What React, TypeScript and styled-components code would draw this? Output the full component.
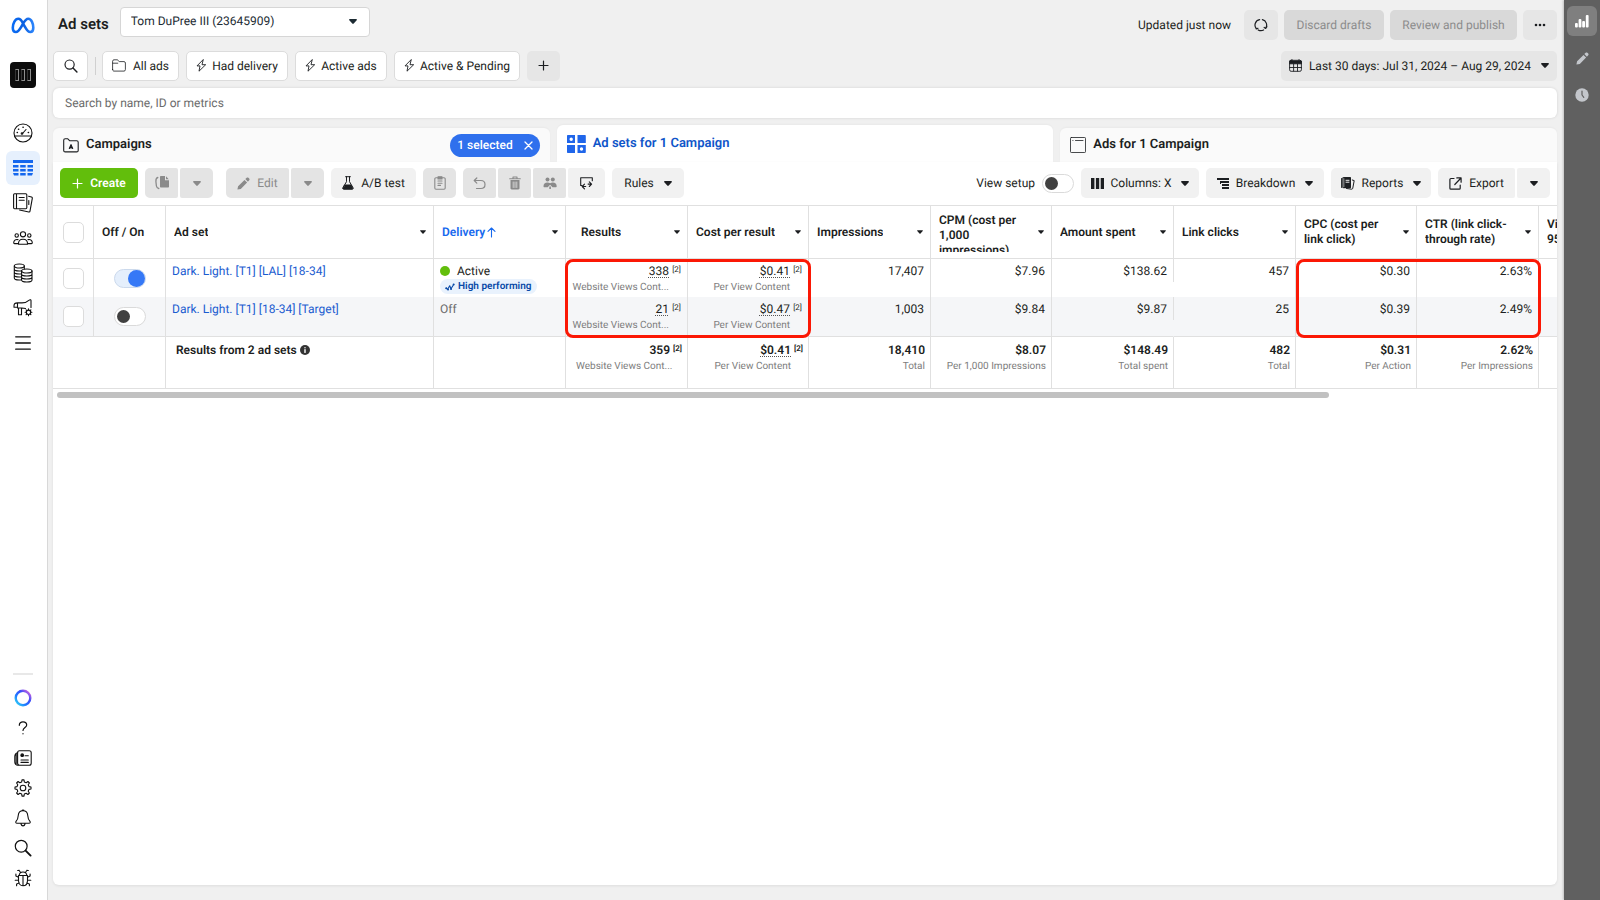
import React from "react";
import styled, { createGlobalStyle, css } from "styled-components";

const GlobalStyle = createGlobalStyle`
  *, *::before, *::after { box-sizing: border-box; }
  body { margin: 0; background: #f0f0f0; color: #1c1e21; font-family: Roboto, "Liberation Sans", sans-serif; font-size: 12px; line-height: 16px; text-rendering: geometricPrecision; }
  button, input, select { font: inherit; color: inherit; margin: 0; text-rendering: inherit; }
  button { cursor: pointer; }
  svg { display: block; flex: none; }
`;

/* ---------- icons ---------- */

type IconProps = { w: number; h?: number; box?: string; sw?: number; fill?: boolean; children: React.ReactNode };
const Icon = ({ w, h = w, box, sw = 1.1, fill, children }: IconProps) => (
  <svg
    width={w}
    height={h}
    viewBox={box ?? `0 0 ${w} ${h}`}
    fill={fill ? "currentColor" : "none"}
    stroke={fill ? "none" : "currentColor"}
    strokeWidth={sw}
    strokeLinecap="round"
    strokeLinejoin="round"
    aria-hidden="true"
  >
    {children}
  </svg>
);

const Caret = ({ small }: { small?: boolean }) => (
  <Icon w={small ? 6 : 8} h={small ? 4 : 5} box="0 0 8 5" fill>
    <path d="M.9 0h6.2c.8 0 1.1.8.6 1.3L4.7 4.6a1 1 0 0 1-1.4 0L.3 1.300C-.2.8.1 0 .9 0z" />
  </Icon>
);
const MetaLogo = () => (
  <svg width="24" height="17" viewBox="0 0 24 17" fill="none" strokeWidth="2.6" aria-label="Meta">
    <defs>
      <linearGradient id="meta" x1="0" x2="1">
        <stop offset="0" stopColor="#0a6cf5" />
        <stop offset=".5" stopColor="#0a5fe0" />
        <stop offset="1" stopColor="#2b84fb" />
      </linearGradient>
    </defs>
    <path
      stroke="url(#meta)"
      d="M11.900 6.300C10.600 3.500 9.200 1.800 7.300 1.800 4.200 1.800 1.800 6.300 1.800 10.800c0 2.600 1.200 4.200 3.100 4.200 2.100 0 3.400-1.900 5.200-4.900l1.800-3.100c1.700-3 3.200-5.200 5.400-5.200 3 0 5 4.600 5 9 0 2.700-1.100 4.200-3 4.200-2.200 0-3.500-2-5.300-5.200z"
    />
  </svg>
);
const GaugeIcon = () => (
  <Icon w={20}>
    <circle cx="10" cy="10" r="9" />
    <path d="M1.500 13h17M9.500 10.500l3.500-4" />
    <circle cx="9" cy="10.500" r=".8" />
    <path d="M4.200 9.500h.2M5.500 6.200h.2M10 4.200h.2M15.300 9.500h.2" strokeWidth="1.500" />
  </Icon>
);
const TableIcon = () => (
  <Icon w={20} h={16} fill>
    <path d="M0 0h20v3H0zM0 5h5.500v2.500H0zM7.200 5h5.500v2.500H7.200zM14.500 5H20v2.500h-5.500zM0 9h5.500v2.500H0zM7.200 9h5.500v2.500H7.200zM14.500 9H20v2.500h-5.500zM0 13h5.500v2.500H1zM7.200 13h5.500v2.500H7.200zM14.500 13H20l-1 2.500h-4.500z" />
  </Icon>
);
const PagesIcon = () => (
  <Icon w={20}>
    <path d="M1.500.8h11.300c.6 0 1 .4 1 1v13c0 .5-.4.900-1 .9H1.500c-.5 0-.9-.4-.9-.9v-13c0-.6.4-1 .9-1zM3.500.8v14.900M6.200 4.500h5M6.200 7.200h5" />
    <path d="M15.600 3.200l2.900.8c.6.200.9.700.8 1.300l-2.300 12.900c-.1.600-.6.900-1.200.8L6.500 17M15.800 7.500v4" />
  </Icon>
);
const PeopleIcon = () => (
  <Icon w={20} h={14}>
    <circle cx="10" cy="3.300" r="2.600" />
    <circle cx="3.700" cy="4.500" r="1.700" />
    <circle cx="16.300" cy="4.500" r="1.700" />
    <path d="M5.500 13.200c-.3-3.200 1.400-5 4.500-5s4.800 1.800 4.500 5zM5 8.600c-2.600-.5-4.200.7-4.300 3.200 0 .6.300.8.800.8h3.300M15 8.600c2.600-.5 4.200.7 4.300 3.200 0 .6-.3.800-.8.800h-3.300" />
  </Icon>
);
const CoinsIcon = () => (
  <Icon w={20}>
    <ellipse cx="6.300" cy="3" rx="5" ry="2" />
    <path d="M1.300 3v12c0 1.100 2.200 2 5 2 .8 0 1.500 0 2.200-.2M11.300 3v3M1.300 6c0 1.100 2.200 2 5 2 .8 0 1.500 0 2.200-.2M1.300 9c0 1.100 2.200 2 5 2 .8 0 1.500 0 2.200-.2M1.300 12c0 1.100 2.200 2 5 2 .8 0 1.500 0 2.200-.2" />
    <ellipse cx="13.800" cy="8" rx="5.200" ry="2" />
    <path d="M8.600 8v9c0 1.100 2.300 2 5.200 2s5.200-.9 5.200-2V8M8.600 11c0 1.100 2.300 2 5.200 2s5.200-.9 5.200-2M8.600 14c0 1.100 2.300 2 5.200 2s5.200-.9 5.200-2" />
  </Icon>
);
const MegaphoneIcon = () => (
  <Icon w={20}>
    <path d="M18 9.500V2.600c0-.7-.8-1.100-1.300-.7-2.300 2-4.600 3-7.700 3H4.500C2.500 4.900 1 6 1 7.700v1.600h3.500v-4.400M12.500 10.600C11.400 10.200 10.200 10 9 10H4.500V9.300M5.500 10.500v6.300h3V10" />
    <circle cx="15.500" cy="14.300" r="2.200" />
    <path d="M15.500 10.900v1M15.500 16.700v1M12.100 14.300h1M17.900 14.300h1M13.100 11.900l.7.7M17.200 16l.7.7M13.100 16.700l.7-.7M17.200 12.600l.7-.7" />
  </Icon>
);
const MenuIcon = () => (
  <Icon w={16} h={14} sw={1.300}>
    <path d="M.7.8h14.600M.7 7h14.600M.7 13.200h14.600" />
  </Icon>
);
const RingIcon = () => (
  <svg width="18" height="18" viewBox="0 0 18 18" fill="none" aria-hidden="true">
    <defs>
      <linearGradient id="ring" x1="0" y1="1" x2="1" y2="0">
        <stop offset="0" stopColor="#35e0f5" />
        <stop offset=".35" stopColor="#1d7bff" />
        <stop offset=".65" stopColor="#3a4dfa" />
        <stop offset="1" stopColor="#f06ad8" />
      </linearGradient>
    </defs>
    <circle cx="9" cy="9" r="7.300" stroke="url(#ring)" strokeWidth="2.400" />
  </svg>
);
const HelpIcon = () => (
  <Icon w={10} h={14} sw={1.200}>
    <path d="M1.300 4.300C1.300 2.200 2.800.8 5 .8s3.700 1.300 3.700 3.200C8.700 6.500 5 6.500 5 9.500M5 12.600v.2" />
  </Icon>
);
const NewsIcon = () => (
  <Icon w={18} h={16}>
    <rect x="3.600" y=".8" width="13.600" height="14.400" rx="2" />
    <path d="M3.600 2.700C1.500 3.200.8 4.500.8 6.500v5c0 2 1 3.700 3.200 3.700M2.200 4v9.500M7 10h7.300M7 12.400h7.300M11 5.800h3.300" />
    <circle cx="8.200" cy="5.200" r="1.300" fill="currentColor" />
  </Icon>
);
const GearIcon = () => (
  <Icon w={18}>
    <circle cx="9" cy="9" r="2.800" />
    <path d="M7.700 2.900L8 .9h2l.3 2 1.900.8 1.700-1.200 1.500 1.500-1.200 1.700.8 1.900 2 .4v2l-2 .4-.8 1.900 1.200 1.700-1.500 1.500-1.700-1.200-1.900.8-.3 2H8l-.3-2-1.900-.8-1.700 1.200L2.600 14l1.200-1.700L3 10.400 1 10V8l2-.4.8-1.900L2.600 4l1.500-1.500 1.700 1.200z" />
  </Icon>
);
const BellIcon = () => (
  <Icon w={18}>
    <path d="M9 1.800c-3.200 0-4.600 2.300-4.800 4.900-.2 3-.8 4.200-2 5.500-.9 1 -.4 2.100.8 2.100h12c1.200 0 1.700-1.100.8-2.100-1.200-1.300-1.800-2.500-2-5.500C13.600 4.100 12.200 1.800 9 1.800zM7 15c.3 1.200 1 1.900 2 1.900s1.700-.7 2-1.900M8 1.800C8 .7 10 .7 10 1.800" />
  </Icon>
);
const SearchIcon = ({ size = 18 }: { size?: number }) => (
  <Icon w={size} box="0 0 18 18" sw={size < 16 ? 1.500 : 1.200}>
    <circle cx="7.200" cy="7.200" r="5.900" />
    <path d="M11.600 11.600l5 5" strokeWidth="1.900" />
  </Icon>
);
const BugIcon = () => (
  <Icon w={18}>
    <path d="M4.500 6.500h9v5c0 3-1.700 5.300-4.500 5.300s-4.500-2.300-4.500-5.300zM9 6.500v10.300M5.200 6.300C5.400 4.200 6.800 3 9 3s3.600 1.200 3.800 3.300M6.600 3.500L5 1.200M11.400 3.500L13 1.200M5 1.200L3.600 1.500M13 1.200l1.400.3M4.500 8.300L1.900 7V5M13.500 8.300L16.100 7V5M4.500 11.300H1.200M13.500 11.300h3.300M5.200 13.900l-2.600 1v1.800M12.800 13.900l2.600 1v1.800" />
  </Icon>
);
const FolderIcon = () => (
  <Icon w={14} h={13} sw={0.800}>
    <path d="M.6 10.600V2.200C.6 1.300 1.200.8 2 .8h3c.5 0 .9.200 1.200.6l.6.900c.2.200.4.300.7.300H12c.9 0 1.400.6 1.400 1.400v6.600c0 .9-.5 1.500-1.400 1.500H2c-.8 0-1.400-.6-1.400-1.500zM.8 4.200h5" />
  </Icon>
);
const BoltIcon = () => (
  <Icon w={11} h={13} sw={0.900}>
    <path d="M7 .8L1 6.900h3l-1 5.300 6.700-6.500H6.400z" />
  </Icon>
);
const PlusIcon = () => (
  <Icon w={11} sw={1.200}>
    <path d="M5.500 1v9M1 5.500h9" />
  </Icon>
);
const RefreshIcon = () => (
  <Icon w={14} sw={1.200}>
    <path d="M2.400 10.800A5.600 5.600 0 0 1 5.600 1.600M8.400 1.600a5.600 5.600 0 0 1 3.200 8.700M9.600 12a5.600 5.600 0 0 1-5.400-.1M1.600 9.200l.7 1.700 1.700-.6M12.900 8.700l-1.200 1.700-1.500-1" />
  </Icon>
);
const DotsIcon = () => (
  <Icon w={12} h={4} fill>
    <circle cx="2" cy="2" r="1.300" />
    <circle cx="6" cy="2" r="1.300" />
    <circle cx="10" cy="2" r="1.300" />
  </Icon>
);
const CalendarIcon = () => (
  <Icon w={13} sw={0.900}>
    <rect x=".6" y="1.300" width="11.800" height="11" rx="1.500" />
    <path d="M.6 2h11.800v2.800H.6z" fill="currentColor" />
    <path d="M.6 8.500h11.800M4.600 5v7M8.500 5v7M3 .6v1M10 .6v1" />
  </Icon>
);
const CampaignIcon = () => (
  <Icon w={16} h={15} sw={1.100}>
    <path d="M.7 12.400V2.300C.7 1.400 1.300.8 2.200.8h2.600l2 2h6.900c.9 0 1.500.6 1.500 1.500v8.100c0 .9-.6 1.500-1.500 1.500H2.200c-.9 0-1.500-.6-1.500-1.500z" />
    <path d="M6.300 10.500L8 6.600l1.700 3.900L8 9.500z" fill="currentColor" />
  </Icon>
);
const GridIcon = () => (
  <Icon w={19} h={18} fill>
    <path
      fill="#2066ea"
      fillRule="evenodd"
      d="M1 0h7v8H0V1c0-.6.400-1 1-1zm3.200 2.500a1.700 1.700 0 1 0 0 3.400 1.700 1.700 0 0 0 0-3.400zM10.500 0h7.300c.6 0 1 .4 1 1v7h-8.300zM0 10h8v8H1c-.6 0-1-.4-1-1zM10.500 10h8.300v7c0 .6-.4 1-1 1h-7.300zm4 2.300a1.700 1.700 0 1 0 0 3.400 1.700 1.700 0 0 0 0-3.400z"
    />
  </Icon>
);
const AdIcon = () => (
  <Icon w={16} sw={0.800}>
    <rect x=".5" y=".5" width="15" height="15" rx=".8" />
    <path d="M2.800 3.500h.2M5.500 3.500h7.500" />
  </Icon>
);
const CloseIcon = () => (
  <Icon w={9} sw={1.300}>
    <path d="M1 1l7 7M8 1L1 8" />
  </Icon>
);
const CopyIcon = () => (
  <Icon w={14} h={14} fill>
    <path d="M6 0h4v4.200h4v6.300c0 .6-.4 1-1 1H6c-.6 0-1-.4-1-1V1c0-.6.400-1 1-1zM11 .3l2.700 2.900H11z" />
    <path d="M2.800 1.500C1 1.800.8 3 .9 5.500l.5 4.500c.3 1.700.9 2.300 2.400 2.500" fill="none" stroke="currentColor" strokeWidth="1.300" />
  </Icon>
);
const PencilIcon = () => (
  <Icon w={13} fill>
    <path d="M.4 12.600l.7-3.400 6.400-6.300 2.600 2.600-6.300 6.400zM8.300 2.100L9.700.8c.5-.5 1.200-.5 1.700 0l.8.8c.5.5.5 1.200 0 1.700l-1.300 1.400z" />
  </Icon>
);
const FlaskIcon = () => (
  <Icon w={12} h={14} sw={1}>
    <path d="M3.600.7h4.800M4.500.7v5L.9 11.800c-.4.800.1 1.500.9 1.500h8.400c.8 0 1.300-.7.9-1.500L7.500 5.700v-5" />
    <path d="M2.900 9h6.200l1.600 3.500H1.300z" fill="currentColor" />
  </Icon>
);
const ClipboardIcon = () => (
  <Icon w={12} h={14}>
    <path d="M3.500 1.800H2c-.7 0-1.200.5-1.200 1.200v9c0 .7.500 1.200 1.200 1.200h8c.7 0 1.200-.5 1.200-1.200V3c0-.7-.5-1.200-1.200-1.200H8.500M4 5h4M4 7.200h4M4 9.400h2.500" />
    <path d="M4 .7h4v2.200H4z" fill="currentColor" />
  </Icon>
);
const UndoIcon = () => (
  <Icon w={13} sw={1.200}>
    <path d="M3.800 1L1.200 3.500l2.600 2.600M1.300 3.500h6.500c2.400 0 4.200 1.700 4.200 4s-1.800 4-4.200 4H3.500" />
  </Icon>
);
const TrashIcon = () => (
  <Icon w={12} h={14}>
    <path d="M.7 2.700h10.600M4 2.500V1h4v1.500" />
    <path d="M1.500 4h9v8.200c0 .7-.5 1.200-1.200 1.200H2.700c-.7 0-1.200-.5-1.200-1.200z" fill="currentColor" stroke="none" />
    <path d="M4.200 6v5.500M6 6v5.500M7.800 6v5.500" stroke="#e5e5e5" strokeWidth=".8" />
  </Icon>
);
const TeamIcon = () => (
  <Icon w={14} h={12} fill>
    <circle cx="4.500" cy="2.500" r="2" />
    <circle cx="9.800" cy="2.500" r="2" />
    <path d="M.5 9.500C.4 7 2 5.600 4.500 5.600c1 0 1.800.2 2.600.6.800-.4 1.700-.6 2.700-.6 2.400 0 4 1.400 3.900 3.900 0 .5-.3.700-.7.700H9.500L7.100 7.800l-2.400 2.400H1.200c-.4 0-.7-.2-.7-.7zM6.300 9.500h1.600V12H6.300z" />
  </Icon>
);
const SwapIcon = () => (
  <Icon w={13} sw={1.100}>
    <path d="M1.800 8.500H.7V.8h11.600v3M4.500 7.200L2.200 9.500l2.300 2.400M2.400 9.500h3.300M9.300 4.800l2.300 2.300-2.300 2.400M11.400 7.100H8.100" />
  </Icon>
);
const ColumnsIcon = () => (
  <Icon w={13} h={11} fill>
    <path d="M0 0h3.400v11H0zM4.900 0h3.300v11H4.900zM9.700 0H13v11H9.700z" />
  </Icon>
);
const BreakdownIcon = () => (
  <Icon w={12} h={11} fill>
    <path d="M0 0h12v2H0zM3 3h9v2H3zM5 6h7v2H5zM5 9h7v2H5zM3 3h1v3H3z" />
  </Icon>
);
const ReportsIcon = () => (
  <Icon w={14} h={13} sw={1}>
    <path d="M.6 1.500v9M2.200.7h7.100v10H2.200z" />
    <path d="M3.500.7h6v9.800h-6z" fill="currentColor" />
    <path d="M5 3.300h3M5 5.200h3" stroke="#f1f1f1" />
    <path d="M11.300 3l1.900.6-1.500 8-.9.600-5.300-.7" />
  </Icon>
);
const ExportIcon = () => (
  <Icon w={13} sw={1.200}>
    <path d="M5 1.500H1.900c-.6 0-1 .4-1 1v8.700c0 .6.400 1 1 1h8.300c.6 0 1-.4 1-1V8M7.800.9h4.300v4.300M12 1L5.800 7.500" />
  </Icon>
);
const BarsIcon = () => (
  <Icon w={14} h={13} fill>
    <rect x="0" y="8" width="2.800" height="4.500" rx="1" />
    <rect x="3.600" y="4" width="2.800" height="8.500" rx="1" />
    <rect x="7.200" y="6" width="2.800" height="6.500" rx="1" />
    <rect x="10.800" y="0" width="2.800" height="12.500" rx="1" />
  </Icon>
);
const ClockIcon = () => (
  <Icon w={14}>
    <circle cx="7" cy="7" r="6.700" fill="currentColor" stroke="none" />
    <path d="M7 3v4l1.800 2.300" stroke="#606060" strokeWidth="1.200" />
  </Icon>
);
const TrendIcon = () => (
  <Icon w={10} h={8} sw={1.100}>
    <path d="M1.200 5.300l1.500 1 2-3.500L6 5.800l2.700-4.300" />
    <path d="M1.200 5.200h.1M3 6.600h.1M6 6h.1M8.600 1.400h.1" strokeWidth="1.900" />
  </Icon>
);
const InfoIcon = () => (
  <Icon w={10}>
    <circle cx="5" cy="5" r="5" fill="#333" stroke="none" />
    <path d="M5 4.600v2.800M5 2.600v.1" stroke="#fff" strokeWidth="1.400" />
  </Icon>
);
const ArrowUpIcon = () => (
  <Icon w={9} h={11}>
    <path d="M4.500 10V1M1 4.300L4.500 1 8 4.300" />
  </Icon>
);

/* ---------- layout ---------- */

const Page = styled.div`
  display: flex;
  min-height: 100vh;
`;
const Sidebar = styled.nav`
  flex: none;
  width: 48px;
  display: flex;
  flex-direction: column;
  align-items: center;
  padding: 17px 1px 7px 0;
  background: #fff;
  border-right: 1px solid #d8d8d8;
  color: #111;
`;
const AccountTile = styled.a`
  display: flex;
  align-items: center;
  justify-content: center;
  gap: 2px;
  width: 26px;
  height: 26px;
  margin: 28px 0;
  border-radius: 4px;
  background: #0c0c0c;
`;
const TileBar = styled.span`
  width: 4px;
  height: 12px;
  border: 1px solid #8e8e8e;
  border-left-color: #333;
`;
const NavButton = styled.button<{ $active?: boolean; $low?: boolean }>`
  flex: none;
  display: flex;
  align-items: center;
  justify-content: center;
  width: 34px;
  height: ${(p) => (p.$low ? 30 : 34)}px;
  margin-bottom: ${(p) => (p.$low ? 0 : 1)}px;
  padding: 0;
  border: 0;
  border-radius: 6px;
  background: ${(p) => (p.$active ? "#e6f0fd" : "transparent")};
  color: ${(p) => (p.$active ? "#1467ee" : "#111")};
`;
const NavRule = styled.hr`
  width: 20px;
  height: 2px;
  margin: auto 0 8px;
  border: 0;
  background: #e8e8e8;
`;
const Main = styled.main`
  flex: 1;
  min-width: 0;
  display: flex;
  flex-direction: column;
  padding: 7px 7px 15px 5px;
`;
const Rail = styled.aside`
  flex: none;
  width: 36px;
  display: flex;
  flex-direction: column;
  align-items: center;
  gap: 7px;
  padding-top: 6px;
  background: #606060;
  box-shadow: -1px 0 2px rgba(0, 0, 0, 0.2);
`;
const RailButton = styled.button<{ $active?: boolean }>`
  display: flex;
  align-items: center;
  justify-content: center;
  width: 30px;
  height: 30px;
  padding: 0;
  border: 0;
  border-radius: 6px;
  background: ${(p) => (p.$active ? "#7f7f7f" : "transparent")};
  color: ${(p) => (p.$active ? "#fff" : "#c3c6cb")};
`;

const TopBar = styled.header`
  display: flex;
  align-items: flex-start;
  min-height: 43px;
`;
const Title = styled.h1`
  margin: 7px 11px 0 5px;
  font-size: 15px;
  line-height: 20px;
  font-weight: 600;
`;
const AccountPicker = styled.div`
  position: relative;
  width: 250px;
  color: #1c2b33;
  svg {
    position: absolute;
    right: 13px;
    top: 12px;
    pointer-events: none;
  }
`;
const AccountSelect = styled.select`
  appearance: none;
  width: 100%;
  height: 30px;
  padding: 0 30px 2px 10px;
  border: 1px solid #d6d6d6;
  border-radius: 4px;
  background: #fff;
`;
const TopActions = styled.div`
  display: flex;
  align-items: center;
  gap: 6px;
  margin-left: auto;
  padding-top: 3px;
`;
const Updated = styled.span`
  margin-right: 7px;
`;

type Tone = "outline" | "plain" | "soft" | "muted" | "blocked" | "create";
const tones: Record<Tone, ReturnType<typeof css>> = {
  outline: css`background: #fff; border: 1px solid #dcdcdc; color: #1c1e21;`,
  plain: css`background: #f1f1f1; color: #1c1e21;`,
  soft: css`background: #e6e6e6; color: #1c1e21;`,
  muted: css`background: #e4e4e4; color: #8a8a8a;`,
  blocked: css`background: #d9d9d9; color: #8c8c8c;`,
  create: css`background: #62be0c; color: #fff; font-weight: 600;`,
};
const Button = styled.button<{ $tone: Tone; $w: number; $side?: "left" | "mid" | "right" }>`
  flex: none;
  display: flex;
  align-items: center;
  justify-content: center;
  gap: 7px;
  min-width: ${(p) => p.$w}px;
  height: 30px;
  padding: 0;
  border: 0;
  border-radius: ${(p) =>
    p.$side === "left" ? "5px 2px 2px 5px" : p.$side === "right" ? "2px 5px 5px 2px" : p.$side === "mid" ? "2px" : "5px"};
  white-space: nowrap;
  ${(p) => tones[p.$tone]}
  &:disabled { cursor: default; }
`;
const QuickFilter = styled(Button)`
  gap: 5px;
`;
const CaretSlot = styled.span`
  margin-left: 3px;
`;
const FilterBar = styled.div`
  display: flex;
  align-items: center;
  gap: 7px;
  min-height: 31px;
`;
const Divider = styled.span`
  width: 1px;
  height: 18px;
  margin-right: -1px;
  background: #d0d0d0;
`;
const Push = styled.span`
  margin-left: auto;
`;
const SearchBox = styled.input`
  width: 100%;
  height: 30px;
  margin: 7px 0;
  padding: 0 12px;
  border: 0;
  border-radius: 6px;
  background: #fff;
  box-shadow: 0 0 3px rgba(0, 0, 0, 0.12);
  &::placeholder { color: #6b6b6b; opacity: 1; }
`;

const Tabs = styled.div`
  display: grid;
  grid-template-columns: repeat(3, 1fr);
  gap: 7px;
  align-items: end;
`;
const Tab = styled.div<{ $active?: boolean }>`
  display: flex;
  align-items: center;
  height: ${(p) => (p.$active ? 37 : 34)}px;
  padding: 0 10px;
  border-radius: 6px 6px 0 0;
  background: ${(p) => (p.$active ? "#fff" : "#fafafa")};
  box-shadow: 0 -1px 2px rgba(0, 0, 0, 0.03);
`;
const TabButton = styled.button<{ $active?: boolean }>`
  display: flex;
  align-items: center;
  gap: 7px;
  height: 30px;
  margin-right: auto;
  padding: 0;
  border: 0;
  background: none;
  font-size: 13px;
  font-weight: 600;
  color: ${(p) => (p.$active ? "#0f56c9" : "#1c1e21")};
`;
const Pill = styled.button`
  display: flex;
  align-items: center;
  gap: 11px;
  height: 23px;
  padding: 0 7px;
  border: 0;
  border-radius: 12px;
  background: #2f70ed;
  color: #fff;
  font-weight: 500;
`;

const Panel = styled.section`
  flex: 1;
  background: #fff;
  border-radius: 0 0 6px 6px;
  box-shadow: 0 1px 3px rgba(0, 0, 0, 0.08);
`;
const Toolbar = styled.div`
  display: flex;
  align-items: center;
  gap: 7px;
  padding: 6px 7px 7px;
`;
const Split = styled.div`
  display: flex;
  gap: 2px;
`;
const SplitSpaced = styled(Split)`
  margin-left: 6px;
`;
const SetupLabel = styled.label`
  display: flex;
  align-items: center;
  gap: 7px;
  margin-left: auto;
  white-space: nowrap;
`;
const Toggle = styled.input`
  appearance: none;
  flex: none;
  display: block;
  position: relative;
  width: 32px;
  height: 19px;
  border: 1px solid #dadada;
  border-radius: 10px;
  background: #fff;
  &::before {
    content: "";
    position: absolute;
    top: 2px;
    left: 2px;
    width: 13px;
    height: 13px;
    border-radius: 50%;
    background: #404040;
  }
  &:checked { background: #e5effc; border-color: #cbd9ec; }
  &:checked::before { top: 0; left: 13px; width: 17px; height: 17px; background: #3578f6; }
`;
const Check = styled.input`
  appearance: none;
  display: block;
  width: 21px;
  height: 21px;
  margin: 0 auto;
  border: 1px solid #dcdcdc;
  border-radius: 5px;
  background: #fff;
`;

const TableArea = styled.div`
  position: relative;
  overflow: hidden;
`;
const Table = styled.table`
  width: 1608px;
  table-layout: fixed;
  border-collapse: separate;
  border-spacing: 0;
  border-top: 1px solid #e0e0e0;
`;
const rule = "1px solid #e0e0e0";
const Head = styled.th<{ $bare?: boolean }>`
  height: 53px;
  padding: ${(p) => (p.$bare ? "0" : "0 7px 0 8px")};
  border-right: ${rule};
  border-bottom: ${rule};
  text-align: left;
  font-weight: 600;
`;
const HeadInner = styled.div<{ $inset?: boolean; $sorted?: boolean }>`
  display: flex;
  align-items: center;
  justify-content: space-between;
  padding-left: ${(p) => (p.$inset ? 7 : 0)}px;
  color: ${(p) => (p.$sorted ? "#1769ee" : "#1c1e21")};
  > svg { color: #1c1e21; }
`;
const HeadText = styled.span`
  display: block;
  max-width: 96px;
  max-height: 39px;
  overflow: hidden;
  line-height: 15px;
`;
const SortText = styled.span`
  display: flex;
  align-items: center;
  gap: 2px;
`;
const Row = styled.tr<{ $shaded?: boolean }>`
  background-color: ${(p) => (p.$shaded ? "#f5f6f8" : "#fff")};
`;
const Cell = styled.td<{ $num?: boolean; $last?: boolean; $short?: boolean; $mid?: boolean }>`
  height: ${(p) => (p.$last ? 40 : 38)}px;
  padding: ${(p) => (p.$mid ? "0" : "4px 6px 0")};
  border-right: ${rule};
  border-bottom: ${(p) => (p.$last ? rule : "0")};
  vertical-align: ${(p) => (p.$mid ? "middle" : "top")};
  text-align: ${(p) => (p.$num ? "right" : "left")};
  white-space: nowrap;
  ${(p) =>
    p.$short &&
    css`
      border-right-color: transparent;
      background: linear-gradient(#e0e0e0, #e0e0e0) right top / 1px 23px no-repeat border-box;
    `}
`;
const TotalCell = styled.td<{ $num?: boolean }>`
  height: 52px;
  padding: 5px ${(p) => (p.$num ? 5 : 7)}px 0 10px;
  border-right: ${rule};
  border-bottom: ${rule};
  vertical-align: top;
  text-align: ${(p) => (p.$num ? "right" : "left")};
  font-weight: 600;
  white-space: nowrap;
`;
const TotalLabel = styled.span`
  display: flex;
  align-items: center;
  gap: 3px;
`;
const Centered = styled.div`
  display: flex;
  justify-content: center;
`;
const NameLink = styled.a`
  color: #1b5cd0;
  text-decoration: none;
`;
const Value = styled.span<{ $dotted?: boolean }>`
  ${(p) =>
    p.$dotted &&
    css`
      text-decoration: underline dotted #555 1px;
      text-underline-offset: 2px;
    `}
`;
const Note = styled.sup`
  display: inline-block;
  width: 12px;
  font-size: 8px;
  line-height: 8px;
  text-align: right;
  vertical-align: 3px;
`;
const Sub = styled.div<{ $noted?: boolean }>`
  margin-right: ${(p) => (p.$noted ? 12 : 0)}px;
  font-size: 10px;
  line-height: 18px;
  font-weight: 400;
  color: #7d7d7d;
`;
const Status = styled.div<{ $off?: boolean }>`
  display: flex;
  align-items: center;
  gap: 7px;
  color: ${(p) => (p.$off ? "#6b6b6b" : "inherit")};
`;
const Dot = styled.span`
  width: 10px;
  height: 10px;
  border-radius: 50%;
  background: #62be0c;
`;
const Badge = styled.span`
  display: inline-flex;
  align-items: center;
  gap: 3px;
  height: 15px;
  padding: 0 5px;
  border-radius: 8px;
  background: #e9f2fd;
  color: #0a4aa8;
  font-size: 10px;
  line-height: 15px;
  font-weight: 600;
  vertical-align: top;
`;
const Highlight = styled.div<{ $left: number; $width: number }>`
  position: absolute;
  top: 54px;
  left: ${(p) => p.$left}px;
  width: ${(p) => p.$width}px;
  height: 79px;
  border: 3px solid #fb1805;
  border-radius: 8px;
  pointer-events: none;
`;
const ScrollTrack = styled.div`
  padding: 3px 4px;
`;
const ScrollThumb = styled.div`
  width: 85%;
  height: 6px;
  border-radius: 3px;
  background: #c1c1c1;
`;

/* ---------- data ---------- */

const columnWidths = [41, 72, 268, 132, 122, 121, 122, 121, 122, 122, 121, 122, 122];
const metricHeads = [
  "Impressions",
  "CPM (cost per 1,000 impressions)",
  "Amount spent",
  "Link clicks",
  "CPC (cost per link click)",
  "CTR (link click-through rate)",
  "Video plays at 95%",
];
const adSets = [
  { name: "Dark. Light. [T1] [LAL] [18-34]", on: true, results: "338", cost: "$0.41", metrics: ["17,407", "$7.96", "$138.62", "457", "$0.30", "2.63%"] },
  { name: "Dark. Light. [T1] [18-34] [Target]", on: false, results: "21", cost: "$0.47", metrics: ["1,003", "$9.84", "$9.87", "25", "$0.39", "2.49%"] },
];
const totals = [
  ["18,410", "Total"],
  ["$8.07", "Per 1,000 Impressions"],
  ["$148.49", "Total spent"],
  ["482", "Total"],
  ["$0.31", "Per Action"],
  ["2.62%", "Per Impressions"],
];
const mainNav = [
  { label: "Account overview", icon: <GaugeIcon /> },
  { label: "Campaigns", icon: <TableIcon />, active: true },
  { label: "Ads reporting", icon: <PagesIcon /> },
  { label: "Audiences", icon: <PeopleIcon /> },
  { label: "Billing", icon: <CoinsIcon /> },
  { label: "Advertising settings", icon: <MegaphoneIcon /> },
  { label: "All tools", icon: <MenuIcon /> },
];
const lowNav = [
  { label: "Meta AI", icon: <RingIcon /> },
  { label: "Help", icon: <HelpIcon /> },
  { label: "News", icon: <NewsIcon /> },
  { label: "Settings", icon: <GearIcon /> },
  { label: "Notifications", icon: <BellIcon /> },
  { label: "Search", icon: <SearchIcon /> },
  { label: "Report a problem", icon: <BugIcon /> },
];

/* ---------- parts ---------- */

const AdSetTable = () => (
  <TableArea>
    <Table>
      <colgroup>
        {columnWidths.map((w, i) => (
          <col key={i} width={w} />
        ))}
      </colgroup>
      <thead>
        <tr>
          <Head $bare>
            <Check type="checkbox" aria-label="Select all ad sets" />
          </Head>
          <Head>Off / On</Head>
          <Head>
            <HeadInner>
              <HeadText>Ad set</HeadText>
              <Caret small />
            </HeadInner>
          </Head>
          <Head>
            <HeadInner $sorted>
              <SortText>
                Delivery
                <ArrowUpIcon />
              </SortText>
              <Caret small />
            </HeadInner>
          </Head>
          <Head>
            <HeadInner $inset>
              <HeadText>Results</HeadText>
              <Caret small />
            </HeadInner>
          </Head>
          <Head>
            <HeadInner>
              <HeadText>Cost per result</HeadText>
              <Caret small />
            </HeadInner>
          </Head>
          {metricHeads.map((h) => (
            <Head key={h}>
              <HeadInner>
                <HeadText>{h}</HeadText>
                <Caret small />
              </HeadInner>
            </Head>
          ))}
        </tr>
      </thead>
      <tbody>
        {adSets.map((row, r) => {
          const last = r === adSets.length - 1;
          return (
            <Row key={row.name} $shaded={last}>
              <Cell $mid $last={last}>
                <Check type="checkbox" aria-label={`Select ${row.name}`} />
              </Cell>
              <Cell $mid $last={last}>
                <Centered>
                  <Toggle type="checkbox" role="switch" defaultChecked={row.on} aria-label={`Turn ${row.name} on or off`} />
                </Centered>
              </Cell>
              <Cell $last={last}>
                <NameLink href="#adset">{row.name}</NameLink>
              </Cell>
              <Cell $last={last}>
                {row.on ? (
                  <>
                    <Status>
                      <Dot />
                      Active
                    </Status>
                    <Badge>
                      <TrendIcon />
                      High performing
                    </Badge>
                  </>
                ) : (
                  <Status $off>Off</Status>
                )}
              </Cell>
              <Cell $num $last={last}>
                <Value $dotted>{row.results}</Value>
                <Note>[2]</Note>
                <Sub $noted>Website Views Cont...</Sub>
              </Cell>
              <Cell $num $last={last}>
                <Value $dotted>{row.cost}</Value>
                <Note>[2]</Note>
                <Sub $noted>Per View Content</Sub>
              </Cell>
              {row.metrics.map((m, i) => (
                <Cell key={i} $num $last={last} $short={i === 2}>
                  {m}
                </Cell>
              ))}
              <Cell $last={last} />
            </Row>
          );
        })}
      </tbody>
      <tfoot>
        <tr>
          <TotalCell colSpan={2} />
          <TotalCell>
            <TotalLabel>
              Results from 2 ad sets
              <InfoIcon />
            </TotalLabel>
          </TotalCell>
          <TotalCell />
          <TotalCell $num>
            <Value>359</Value>
            <Note>[2]</Note>
            <Sub $noted>Website Views Cont...</Sub>
          </TotalCell>
          <TotalCell $num>
            <Value $dotted>$0.41</Value>
            <Note>[2]</Note>
            <Sub $noted>Per View Content</Sub>
          </TotalCell>
          {totals.map(([v, s], i) => (
            <TotalCell key={i} $num>
              {v}
              <Sub>{s}</Sub>
            </TotalCell>
          ))}
          <TotalCell />
        </tr>
      </tfoot>
    </Table>
    <Highlight $left={512} $width={246} />
    <Highlight $left={1243} $width={245} />
  </TableArea>
);

const MenuCaret = () => (
  <CaretSlot>
    <Caret />
  </CaretSlot>
);

export default function App() {
  return (
    <>
      <GlobalStyle />
      <Page>
        <Sidebar aria-label="Ads Manager">
          <MetaLogo />
          <AccountTile href="#business" aria-label="Business account">
            <TileBar />
            <TileBar />
            <TileBar />
          </AccountTile>
          {mainNav.map((n) => (
            <NavButton key={n.label} $active={n.active} aria-label={n.label}>
              {n.icon}
            </NavButton>
          ))}
          <NavRule />
          {lowNav.map((n) => (
            <NavButton key={n.label} $low aria-label={n.label}>
              {n.icon}
            </NavButton>
          ))}
        </Sidebar>

        <Main>
          <TopBar>
            <Title>Ad sets</Title>
            <AccountPicker>
              <AccountSelect aria-label="Ad account">
                <option>Tom DuPree III (23645909)</option>
              </AccountSelect>
              <Caret />
            </AccountPicker>
            <TopActions>
              <Updated>Updated just now</Updated>
              <Button $tone="soft" $w={34} aria-label="Refresh">
                <RefreshIcon />
              </Button>
              <Button $tone="blocked" $w={100} disabled>
                Discard drafts
              </Button>
              <Button $tone="blocked" $w={127} disabled>
                Review and publish
              </Button>
              <Button $tone="soft" $w={34} aria-label="More">
                <DotsIcon />
              </Button>
            </TopActions>
          </TopBar>

          <FilterBar>
            <Button $tone="outline" $w={35} aria-label="Search filters">
              <SearchIcon size={14} />
            </Button>
            <Divider />
            <Button $tone="outline" $w={77}>
              <FolderIcon />
              All ads
            </Button>
            <QuickFilter $tone="outline" $w={102}>
              <BoltIcon />
              Had delivery
            </QuickFilter>
            <QuickFilter $tone="outline" $w={92}>
              <BoltIcon />
              Active ads
            </QuickFilter>
            <QuickFilter $tone="outline" $w={126}>
              <BoltIcon />
              Active &amp; Pending
            </QuickFilter>
            <Button $tone="soft" $w={33} aria-label="Add view">
              <PlusIcon />
            </Button>
            <Push />
            <Button $tone="soft" $w={276} aria-haspopup="true">
              <CalendarIcon />
              Last 30 days: Jul 31, 2024 – Aug 29, 2024
              <MenuCaret />
            </Button>
          </FilterBar>

          <SearchBox type="search" placeholder="Search by name, ID or metrics" aria-label="Search by name, ID or metrics" />

          <Tabs>
            <Tab>
              <TabButton>
                <CampaignIcon />
                Campaigns
              </TabButton>
              <Pill aria-label="1 selected, clear">
                1 selected
                <CloseIcon />
              </Pill>
            </Tab>
            <Tab $active>
              <TabButton $active>
                <GridIcon />
                Ad sets for 1 Campaign
              </TabButton>
            </Tab>
            <Tab>
              <TabButton>
                <AdIcon />
                Ads for 1 Campaign
              </TabButton>
            </Tab>
          </Tabs>

          <Panel>
            <Toolbar>
              <Button $tone="create" $w={78}>
                <PlusIcon />
                Create
              </Button>
              <Split>
                <Button $tone="muted" $w={33} $side="left" disabled aria-label="Duplicate">
                  <CopyIcon />
                </Button>
                <Button $tone="muted" $w={33} $side="right" disabled aria-label="Duplicate options">
                  <Caret />
                </Button>
              </Split>
              <SplitSpaced>
                <Button $tone="muted" $w={63} $side="left" disabled>
                  <PencilIcon />
                  Edit
                </Button>
                <Button $tone="muted" $w={33} $side="right" disabled aria-label="Edit options">
                  <Caret />
                </Button>
              </SplitSpaced>
              <Button $tone="plain" $w={85}>
                <FlaskIcon />
                A/B test
              </Button>
              <Button $tone="muted" $w={33} disabled aria-label="Paste">
                <ClipboardIcon />
              </Button>
              <Split>
                <Button $tone="muted" $w={33} $side="left" disabled aria-label="Undo">
                  <UndoIcon />
                </Button>
                <Button $tone="muted" $w={33} $side="mid" disabled aria-label="Delete">
                  <TrashIcon />
                </Button>
                <Button $tone="muted" $w={33} $side="mid" disabled aria-label="Audience">
                  <TeamIcon />
                </Button>
                <Button $tone="plain" $w={37} $side="right" aria-label="Move">
                  <SwapIcon />
                </Button>
              </Split>
              <Button $tone="plain" $w={72} aria-haspopup="true">
                Rules
                <MenuCaret />
              </Button>
              <SetupLabel>
                View setup
                <Toggle type="checkbox" role="switch" />
              </SetupLabel>
              <Button $tone="plain" $w={118} aria-haspopup="true">
                <ColumnsIcon />
                Columns: X
                <MenuCaret />
              </Button>
              <Button $tone="plain" $w={118} aria-haspopup="true">
                <BreakdownIcon />
                Breakdown
                <MenuCaret />
              </Button>
              <Button $tone="plain" $w={100} aria-haspopup="true">
                <ReportsIcon />
                Reports
                <MenuCaret />
              </Button>
              <Split>
                <Button $tone="plain" $w={77} $side="left">
                  <ExportIcon />
                  Export
                </Button>
                <Button $tone="plain" $w={33} $side="right" aria-label="Export options">
                  <Caret />
                </Button>
              </Split>
            </Toolbar>
            <AdSetTable />
            <ScrollTrack>
              <ScrollThumb />
            </ScrollTrack>
          </Panel>
        </Main>

        <Rail>
          <RailButton $active aria-label="Charts">
            <BarsIcon />
          </RailButton>
          <RailButton aria-label="Edit">
            <PencilIcon />
          </RailButton>
          <RailButton aria-label="History">
            <ClockIcon />
          </RailButton>
        </Rail>
      </Page>
    </>
  );
}
